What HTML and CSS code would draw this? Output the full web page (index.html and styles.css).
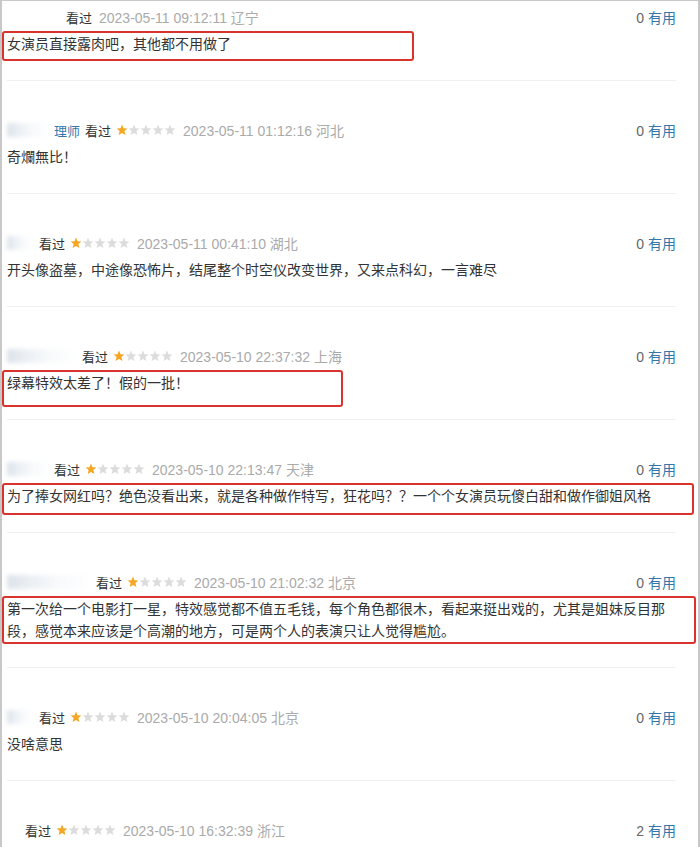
FILE: index.html
```html
<!DOCTYPE html>
<html lang="zh-CN">
<head>
    <meta charset="UTF-8">
    <meta name="viewport" content="width=device-width, initial-scale=1.0">
    <title>短评</title>
    <link rel="stylesheet" href="styles.css">
</head>
<body>
    <div class="comment-list">
        <div class="comment first">
            <div class="comment-info">
                <span class="mask mask-l blank"></span>
                <span class="watched">看过</span>
                <span class="time">2023-05-11 09:12:11 辽宁</span>
                <span class="votes"><span class="count">0</span> <a href="#">有用</a></span>
            </div>
            <p class="comment-text hl hl-1">女演员直接露肉吧，其他都不用做了</p>
        </div>

        <div class="comment">
            <div class="comment-info">
                <span class="mask mask-m"></span>
                <a href="#" class="user">理师</a>
                <span class="watched">看过</span>
                <span class="stars"><svg width="60" height="12" viewBox="0 0 60 12"><use href="#star" class="on" x="0"/><use href="#star" x="12"/><use href="#star" x="24"/><use href="#star" x="36"/><use href="#star" x="48"/></svg></span>
                <span class="time">2023-05-11 01:12:16 河北</span>
                <span class="votes"><span class="count">0</span> <a href="#">有用</a></span>
            </div>
            <p class="comment-text">奇爛無比！</p>
        </div>

        <div class="comment">
            <div class="comment-info">
                <span class="mask mask-s"></span>
                <span class="watched">看过</span>
                <span class="stars"><svg width="60" height="12" viewBox="0 0 60 12"><use href="#star" class="on" x="0"/><use href="#star" x="12"/><use href="#star" x="24"/><use href="#star" x="36"/><use href="#star" x="48"/></svg></span>
                <span class="time">2023-05-11 00:41:10 湖北</span>
                <span class="votes"><span class="count">0</span> <a href="#">有用</a></span>
            </div>
            <p class="comment-text">开头像盗墓，中途像恐怖片，结尾整个时空仪改变世界，又来点科幻，一言难尽</p>
        </div>

        <div class="comment">
            <div class="comment-info">
                <span class="mask mask-xl"></span>
                <span class="watched">看过</span>
                <span class="stars"><svg width="60" height="12" viewBox="0 0 60 12"><use href="#star" class="on" x="0"/><use href="#star" x="12"/><use href="#star" x="24"/><use href="#star" x="36"/><use href="#star" x="48"/></svg></span>
                <span class="time">2023-05-10 22:37:32 上海</span>
                <span class="votes"><span class="count">0</span> <a href="#">有用</a></span>
            </div>
            <p class="comment-text hl hl-4">绿幕特效太差了！假的一批！</p>
        </div>

        <div class="comment">
            <div class="comment-info">
                <span class="mask mask-m"></span>
                <span class="watched">看过</span>
                <span class="stars"><svg width="60" height="12" viewBox="0 0 60 12"><use href="#star" class="on" x="0"/><use href="#star" x="12"/><use href="#star" x="24"/><use href="#star" x="36"/><use href="#star" x="48"/></svg></span>
                <span class="time">2023-05-10 22:13:47 天津</span>
                <span class="votes"><span class="count">0</span> <a href="#">有用</a></span>
            </div>
            <p class="comment-text hl hl-5">为了捧女网红吗？绝色没看出来，就是各种做作特写，狂花吗？？一个个女演员玩傻白甜和做作御姐风格</p>
        </div>

        <div class="comment">
            <div class="comment-info">
                <span class="mask mask-xxl"></span>
                <span class="watched">看过</span>
                <span class="stars"><svg width="60" height="12" viewBox="0 0 60 12"><use href="#star" class="on" x="0"/><use href="#star" x="12"/><use href="#star" x="24"/><use href="#star" x="36"/><use href="#star" x="48"/></svg></span>
                <span class="time">2023-05-10 21:02:32 北京</span>
                <span class="votes"><span class="count">0</span> <a href="#">有用</a></span>
            </div>
            <p class="comment-text hl hl-6">第一次给一个电影打一星，特效感觉都不值五毛钱，每个角色都很木，看起来挺出戏的，尤其是姐妹反目那段，感觉本来应该是个高潮的地方，可是两个人的表演只让人觉得尴尬。</p>
        </div>

        <div class="comment">
            <div class="comment-info">
                <span class="mask mask-s"></span>
                <span class="watched">看过</span>
                <span class="stars"><svg width="60" height="12" viewBox="0 0 60 12"><use href="#star" class="on" x="0"/><use href="#star" x="12"/><use href="#star" x="24"/><use href="#star" x="36"/><use href="#star" x="48"/></svg></span>
                <span class="time">2023-05-10 20:04:05 北京</span>
                <span class="votes"><span class="count">0</span> <a href="#">有用</a></span>
            </div>
            <p class="comment-text">没啥意思</p>
        </div>

        <div class="comment last">
            <div class="comment-info">
                <span class="mask mask-xs blank"></span>
                <span class="watched">看过</span>
                <span class="stars"><svg width="60" height="12" viewBox="0 0 60 12"><use href="#star" class="on" x="0"/><use href="#star" x="12"/><use href="#star" x="24"/><use href="#star" x="36"/><use href="#star" x="48"/></svg></span>
                <span class="time">2023-05-10 16:32:39 浙江</span>
                <span class="votes"><span class="count">2</span> <a href="#">有用</a></span>
            </div>
        </div>
    </div>

    <svg class="defs" width="0" height="0">
        <defs>
            <polygon id="star" points="6,0.6 7.5,4.2 11.4,4.5 8.4,7.1 9.4,11.1 6,9 2.6,11.1 3.6,7.1 0.6,4.5 4.5,4.2"/>
        </defs>
    </svg>
</body>
</html>
```

FILE: styles.css
```css
* {
    margin: 0;
    padding: 0;
    box-sizing: border-box;
}

body {
    font-family: "Liberation Sans", "Noto Sans CJK SC", sans-serif;
    color: #333;
    background: #fff;
    overflow: hidden;
}

a {
    text-decoration: none;
}

/* 短评列表外框 */
.comment-list {
    width: 700px;
    min-height: 847px;
    border-top: 1px solid #c8c8c8;
    border-left: 2px solid #c8c8c8;
    border-right: 2px solid #c8c8c8;
}

.comment {
    margin: 0 22px 0 5px;
    padding: 39px 0 25px;
    border-bottom: 1px solid #f0f0f0;
}

.comment.first {
    padding-top: 6px;
}

.comment.last {
    border-bottom: 0;
    padding-bottom: 0;
}

.comment-info {
    display: flex;
    align-items: center;
    gap: 5px;
    height: 20px;
    font-size: 13px;
    white-space: nowrap;
}

/* 打码的用户名 */
.mask {
    display: inline-block;
    height: 14px;
    background: linear-gradient(90deg, #cfd9e3 0, #e3e9ef 25%, rgba(238, 242, 246, 0.6) 60%, transparent 100%);
    filter: blur(2px);
    opacity: 0.75;
}

.mask.blank {
    background: none;
}

.mask-xs { width: 13px; }
.mask-s { width: 27px; }
.mask-m { width: 42px; }
.mask-l { width: 54px; }
.mask-xl { width: 70px; }
.mask-xxl { width: 84px; }

.user {
    color: #37a;
}

.watched {
    color: #333;
}

.stars svg {
    display: block;
    fill: #dcdcdc;
}

.stars .on {
    fill: #f5a623;
}

.time {
    color: #aaa;
    font-size: 14px;
    margin-left: 2px;
}

.votes {
    margin-left: auto;
    font-size: 14px;
    color: #666;
}

.votes a {
    color: #37a;
}

.comment-text {
    margin-top: 6px;
    font-size: 14px;
    line-height: 22px;
}

/* 红框标注 */
.hl {
    --pb: 4px;
    border: 2px solid #d8332c;
    border-radius: 3px;
    margin: 4px 0 calc(-2px - var(--pb)) -5px;
    padding: 0 3px var(--pb) 3px;
}

.hl-1 { width: 412px; }
.hl-4 { width: 341px; --pb: 11px; }
.hl-5 { width: 692px; --pb: 6px; }
.hl-6 { width: 694px; --pb: 0px; }

.defs {
    position: absolute;
}
```
